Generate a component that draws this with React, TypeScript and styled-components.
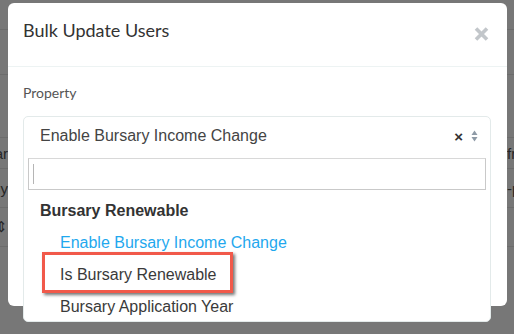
import styled, { createGlobalStyle } from "styled-components";

const Global = createGlobalStyle`
  html, body {
    margin: 0;
    padding: 0;
  }
  body {
    width: 514px;
    height: 334px;
    overflow: hidden;
    background: #777777;
    font-family: "Liberation Sans", Arial, sans-serif;
  }
`;

const Stage = styled.div`
  position: relative;
  width: 514px;
  height: 334px;
  overflow: hidden;
  background: #777777;
`;

/* page behind the dimmed overlay */
const Hint = styled.div`
  margin-top: -14px;
  height: 16px;
  padding-left: 64px;
  font-size: 16px;
  line-height: 15px;
  color: #3d3d3d;
`;

const Table = styled.div`
  display: flex;
  flex-direction: column;
`;

const Row = styled.div<{ h: number }>`
  display: flex;
  justify-content: space-between;
  align-items: center;
  height: ${(p) => p.h}px;
  border-bottom: 1px solid #6c6c6c;
  font-size: 15px;
  color: #262626;
`;

const EdgeLeft = styled.span`
  width: 8px;
  overflow: hidden;
  direction: rtl;
  white-space: nowrap;
`;

const EdgeRight = styled.span`
  width: 7px;
  overflow: hidden;
  white-space: nowrap;
`;

/* modal */
const Modal = styled.div`
  position: absolute;
  left: 8px;
  top: 3px;
  width: 499px;
  height: 303px;
  background: #fff;
  border-radius: 6px;
`;

const Header = styled.div`
  display: flex;
  justify-content: space-between;
  align-items: flex-start;
  height: 64px;
  padding: 16px 18px 0 15px;
  box-sizing: border-box;
  border-bottom: 1px solid #edf3f3;
`;

const Title = styled.h4`
  margin: 0;
  font-family: Lato, "Open Sans", sans-serif;
  font-weight: 400;
  font-size: 18px;
  line-height: 22px;
  color: #333;
`;

const Close = styled.button`
  border: 0;
  background: none;
  padding: 0;
  margin-top: 8px;
  width: 15px;
  height: 14px;
  display: flex;
  color: #c2c6ca;
`;

const Body = styled.div`
  padding: 17px 15px 0;
`;

const Label = styled.div`
  font-family: Lato, "Open Sans", sans-serif;
  font-size: 14px;
  line-height: 17px;
  color: #555;
  margin-bottom: 15px;
`;

const Select = styled.div`
  width: 468px;
  box-sizing: border-box;
  border: 1px solid #e3eaea;
  border-radius: 5px;
  background: #fff;
`;

const Current = styled.div`
  display: flex;
  align-items: center;
  height: 38px;
  padding: 0 12px 0 16px;
  font-size: 16px;
  color: #444;
`;

const CurrentText = styled.span`
  flex: 1;
  line-height: 38px;
`;

const Clear = styled.span`
  font-size: 15px;
  font-weight: 700;
  color: #333;
  margin-right: 8px;
  line-height: 1;
`;

const Search = styled.div`
  padding: 3px 4px 0;
`;

const SearchBox = styled.div`
  height: 32px;
  box-sizing: border-box;
  border: 1px solid #c9c9c9;
  border-top-color: #d8d8d8;
  display: flex;
  align-items: center;
  padding-left: 4px;
`;

const Caret = styled.span`
  width: 1px;
  height: 20px;
  background: #b5b5b5;
`;

const Group = styled.div`
  padding: 11px 16px 6px;
  font-size: 16px;
  line-height: 20px;
  font-weight: 700;
  color: #333;
`;

const Option = styled.div<{ active?: boolean }>`
  position: relative;
  height: 32px;
  line-height: 32px;
  padding-left: 36px;
  font-size: 16px;
  color: ${(p) => (p.active ? "#1fa8ee" : "#3a3a3a")};
  &:last-child {
    height: 30px;
  }
`;

const Annotation = styled.span`
  position: absolute;
  left: 18px;
  top: -7px;
  width: 191px;
  height: 41px;
  box-sizing: border-box;
  border: 3px solid #f1594a;
  box-shadow: 2px 2px 3px rgba(0, 0, 0, 0.55);
`;

const rows = [
  { h: 27, l: "", r: "" },
  { h: 44, l: "", r: "" },
  { h: 62, l: "", r: "" },
  { h: 30, l: "Bursar", r: "fr" },
  { h: 38, l: "Any", r: "-p" },
  { h: 38, l: "⇕", r: "" },
  { h: 90, l: "", r: "" },
];

export default function App() {
  return (
    <Stage>
      <Global />
      <Hint>Enter 3 or more letters to search</Hint>
      <Table>
        {rows.map((r, i) => (
          <Row key={i} h={r.h}>
            <EdgeLeft>{r.l}</EdgeLeft>
            <EdgeRight>{r.r}</EdgeRight>
          </Row>
        ))}
      </Table>

      <Modal>
        <Header>
          <Title>Bulk Update Users</Title>
          <Close aria-label="Close">
            <svg width="15" height="14" viewBox="0 0 15 14">
              <path
                d="M2 1.5 L13 12.5 M13 1.5 L2 12.5"
                stroke="currentColor"
                strokeWidth="3.6"
                strokeLinecap="butt"
              />
            </svg>
          </Close>
        </Header>
        <Body>
          <Label>Property</Label>
          <Select>
            <Current>
              <CurrentText>Enable Bursary Income Change</CurrentText>
              <Clear>×</Clear>
              <svg width="7" height="12" viewBox="0 0 7 12">
                <path d="M3.5 0.5 L6.5 5 H0.5 Z" fill="#8e9aa6" />
                <path d="M3.5 11.5 L6.5 7 H0.5 Z" fill="#8e9aa6" />
              </svg>
            </Current>
            <Search>
              <SearchBox>
                <Caret />
              </SearchBox>
            </Search>
            <Group>Bursary Renewable</Group>
            <Option active>Enable Bursary Income Change</Option>
            <Option>
              Is Bursary Renewable
              <Annotation />
            </Option>
            <Option>Bursary Application Year</Option>
          </Select>
        </Body>
      </Modal>
    </Stage>
  );
}
